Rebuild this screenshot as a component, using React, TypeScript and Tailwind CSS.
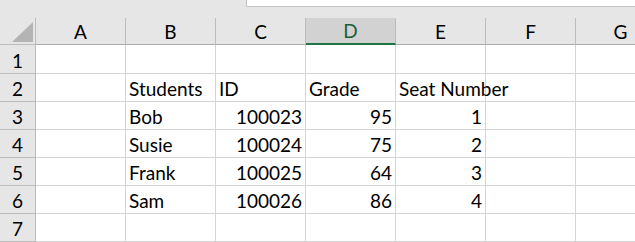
const columns = ["A", "B", "C", "D", "E", "F", "G"]

type Cell = { text: string; align?: "left" | "right" }

// rows keyed by column index (0 = A)
const rows: Cell[][] = [
  [],
  [{ text: "" }, { text: "Students" }, { text: "ID" }, { text: "Grade" }, { text: "Seat Number" }],
  [{ text: "" }, { text: "Bob" }, { text: "100023", align: "right" }, { text: "95", align: "right" }, { text: "1", align: "right" }],
  [{ text: "" }, { text: "Susie" }, { text: "100024", align: "right" }, { text: "75", align: "right" }, { text: "2", align: "right" }],
  [{ text: "" }, { text: "Frank" }, { text: "100025", align: "right" }, { text: "64", align: "right" }, { text: "3", align: "right" }],
  [{ text: "" }, { text: "Sam" }, { text: "100026", align: "right" }, { text: "86", align: "right" }, { text: "4", align: "right" }],
  [],
]

export default function App() {
  return (
    <div className="w-[635px] h-[242px] overflow-hidden bg-white font-['Lato',sans-serif] text-[19px] leading-none text-black">
      {/* formula bar edge */}
      <div className="h-[18px] bg-[#e6e6e6] flex justify-end">
        <div className="w-[389px] h-[7px] shrink-0 bg-white border-l border-b border-[#c6c6c6]"></div>
      </div>

      {/* column headers */}
      <div className="flex h-[27px] bg-[#e6e6e6]">
        <div className="w-[36px] shrink-0 relative border-r border-b border-[#bcbcbc]">
          <svg className="absolute left-[12px] top-[4px]" width="21" height="20" viewBox="0 0 21 20">
            <polygon points="21,0 21,20 0,20" fill="#b4b4b4" />
          </svg>
        </div>
        {columns.map((c) =>
          c === "D" ? (
            <div
              key={c}
              className="w-[90px] shrink-0 flex items-center justify-center bg-[#d2d2d2] border-r border-[#bcbcbc] border-b-2 border-b-[#217346] text-[#1d5e3a]"
            >
              {c}
            </div>
          ) : (
            <div
              key={c}
              className="w-[90px] shrink-0 flex items-center justify-center border-r border-b border-[#bcbcbc] border-b-[#ababab]"
            >
              {c}
            </div>
          )
        )}
      </div>

      {/* data rows */}
      {rows.map((row, r) => (
        <div key={r} className={`flex ${r === 0 ? "h-[29px]" : "h-[28px]"}`}>
          <div className="w-[36px] shrink-0 flex items-end justify-center pb-[3px] bg-[#e6e6e6] border-r border-b border-[#bcbcbc]">
            {r + 1}
          </div>
          {columns.map((c, i) => {
            const cell = row[i]
            return (
              <div
                key={c}
                className={`w-[90px] shrink-0 flex items-end pb-[3px] border-r border-b border-[#d4d4d4] whitespace-nowrap ${
                  cell?.align === "right" ? "justify-end pr-[3px]" : "justify-start pl-[3px]"
                }`}
              >
                {cell?.text}
              </div>
            )
          })}
        </div>
      ))}
    </div>
  )
}
